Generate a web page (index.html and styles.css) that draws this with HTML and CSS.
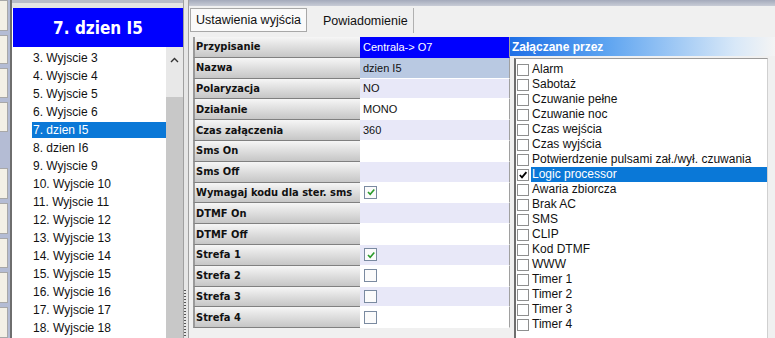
FILE: index.html
```html
<!DOCTYPE html>
<html>
<head>
<meta charset="utf-8">
<link rel="stylesheet" href="styles.css">
</head>
<body>
<div class="app">
  <div class="strip">
    <div class="sbtn h33"></div>
    <div class="sbtn h31"></div>
    <div class="sbtn h32"></div>
    <div class="sbtn h32"></div>
    <div class="sgap"></div>
    <div class="sbtn h33"></div>
    <div class="sbtn h33"></div>
    <div class="sbtn h32"></div>
    <div class="sbtn h33"></div>
    <div class="sbtn h33"></div>
  </div>
  <div class="left">
    <div class="left-top"></div>
    <div class="title">7. dzien I5</div>
    <div class="listwrap">
      <ul class="outlist">
        <li>3. Wyjscie 3</li>
        <li>4. Wyjscie 4</li>
        <li>5. Wyjscie 5</li>
        <li>6. Wyjscie 6</li>
        <li class="sel">7. dzien I5</li>
        <li>8. dzien I6</li>
        <li>9. Wyjscie 9</li>
        <li>10. Wyjscie 10</li>
        <li>11. Wyjscie 11</li>
        <li>12. Wyjscie 12</li>
        <li>13. Wyjscie 13</li>
        <li>14. Wyjscie 14</li>
        <li>15. Wyjscie 15</li>
        <li>16. Wyjscie 16</li>
        <li>17. Wyjscie 17</li>
        <li>18. Wyjscie 18</li>
      </ul>
      <div class="vscroll">
        <div class="arrow"><svg width="9" height="6" viewBox="0 0 9 6"><path d="M1 5 L4.5 1.5 L8 5" fill="none" stroke="#333" stroke-width="1.4"/></svg></div>
        <div class="thumb"></div>
      </div>
    </div>
  </div>
  <div class="splitter"><div class="grip"></div></div>
  <div class="main">
    <div class="topband"></div>
    <div class="tabs">
      <div class="tab active">Ustawienia wyjścia</div>
      <div class="tab">Powiadomienie</div>
    </div>
    <div class="content">
      <div class="grid">
        <div class="row"><div class="lab">Przypisanie</div><div class="val v-blue">Centrala-&gt; O7</div></div>
        <div class="row"><div class="lab">Nazwa</div><div class="val v-sel">dzien I5</div></div>
        <div class="row"><div class="lab">Polaryzacja</div><div class="val v-lav">NO</div></div>
        <div class="row"><div class="lab">Działanie</div><div class="val">MONO</div></div>
        <div class="row"><div class="lab">Czas załączenia</div><div class="val v-lav">360</div></div>
        <div class="row"><div class="lab">Sms On</div><div class="val"></div></div>
        <div class="row"><div class="lab">Sms Off</div><div class="val v-lav"></div></div>
        <div class="row"><div class="lab">Wymagaj kodu dla ster. sms</div><div class="val"><span class="cb on"><svg width="10" height="10" viewBox="0 0 10 10"><path d="M2 5 L4.2 7.3 L8.3 2.5" fill="none" stroke="#2a9a2a" stroke-width="1.6"/></svg></span></div></div>
        <div class="row"><div class="lab">DTMF On</div><div class="val v-lav"></div></div>
        <div class="row"><div class="lab">DTMF Off</div><div class="val"></div></div>
        <div class="row"><div class="lab">Strefa 1</div><div class="val v-lav"><span class="cb on"><svg width="10" height="10" viewBox="0 0 10 10"><path d="M2 5 L4.2 7.3 L8.3 2.5" fill="none" stroke="#2a9a2a" stroke-width="1.6"/></svg></span></div></div>
        <div class="row"><div class="lab">Strefa 2</div><div class="val"><span class="cb"></span></div></div>
        <div class="row"><div class="lab">Strefa 3</div><div class="val v-lav"><span class="cb"></span></div></div>
        <div class="row"><div class="lab">Strefa 4</div><div class="val"><span class="cb"></span></div></div>
      </div>
      <div class="right">
        <div class="rhead">Załączane przez</div>
        <div class="rbox">
          <ul class="chk">
            <li><span class="sq"></span><span class="t">Alarm</span></li>
            <li><span class="sq"></span><span class="t">Sabotaż</span></li>
            <li><span class="sq"></span><span class="t">Czuwanie pełne</span></li>
            <li><span class="sq"></span><span class="t">Czuwanie noc</span></li>
            <li><span class="sq"></span><span class="t">Czas wejścia</span></li>
            <li><span class="sq"></span><span class="t">Czas wyjścia</span></li>
            <li><span class="sq"></span><span class="t">Potwierdzenie pulsami zał./wył. czuwania</span></li>
            <li class="sel"><span class="sq"><svg width="10" height="10" viewBox="0 0 10 10"><path d="M1.8 5 L4 7.4 L8.4 2.2" fill="none" stroke="#000" stroke-width="1.8"/></svg></span><span class="t">Logic processor</span></li>
            <li><span class="sq"></span><span class="t">Awaria zbiorcza</span></li>
            <li><span class="sq"></span><span class="t">Brak AC</span></li>
            <li><span class="sq"></span><span class="t">SMS</span></li>
            <li><span class="sq"></span><span class="t">CLIP</span></li>
            <li><span class="sq"></span><span class="t">Kod DTMF</span></li>
            <li><span class="sq"></span><span class="t">WWW</span></li>
            <li><span class="sq"></span><span class="t">Timer 1</span></li>
            <li><span class="sq"></span><span class="t">Timer 2</span></li>
            <li><span class="sq"></span><span class="t">Timer 3</span></li>
            <li><span class="sq"></span><span class="t">Timer 4</span></li>
          </ul>
        </div>
      </div>
    </div>
  </div>
</div>
</body>
</html>
```

FILE: styles.css
```css
html, body {
  margin: 0;
  padding: 0;
}
body {
  width: 775px;
  height: 338px;
  overflow: hidden;
  background: #f0f0f0;
  font-family: "Liberation Sans", Arial, sans-serif;
  font-size: 12px;
  color: #000;
}
ul { margin: 0; padding: 0; list-style: none; }

.app {
  display: flex;
  height: 338px;
}

/* left button strip */
.strip {
  width: 10px;
  background: #b4bcd4;
  display: flex;
  flex-direction: column;
  gap: 4px;
  border-right: 2px solid #6e6e6e;
}
.sbtn {
  width: 8px;
  background: #f3f0e6;
  border: 1px solid #a8a8a8;
  border-left: none;
  box-sizing: border-box;
}
.h33 { height: 33px; }
.h31 { height: 31px; }
.h32 { height: 32px; }
.sgap { height: 30px; }

/* left panel */
.left {
  width: 171px;
  display: flex;
  flex-direction: column;
  background: #fff;
}
.left-top {
  height: 8px;
  background: linear-gradient(#b8bcc8 0 3px, #e4e4e4 3px);
}
.title {
  height: 39px;
  background: #0000ff;
  color: #fff;
  font-family: "DejaVu Sans Condensed", "DejaVu Sans", sans-serif;
  font-stretch: condensed;
  font-weight: bold;
  font-size: 17px;
  display: flex;
  align-items: center;
  justify-content: center;
  margin-left: 1px;
}
.listwrap {
  flex: 1;
  display: flex;
  min-height: 0;
}
.outlist {
  flex: 1;
  padding-top: 2px;
  padding-left: 20px;
}
.outlist li {
  height: 18px;
  line-height: 18px;
  padding-left: 1px;
  font-size: 12px;
  color: #111;
  white-space: nowrap;
}
.outlist li.sel {
  background: #0a78d7;
  color: #fff;
  height: 16px;
  line-height: 16px;
  margin: 1px 0;
}
.vscroll {
  width: 17px;
  background: #e8e8e8;
  display: flex;
  flex-direction: column;
  align-items: center;
}
.arrow {
  height: 22px;
  display: flex;
  align-items: center;
  justify-content: center;
  padding-top: 2px;
}
.thumb {
  margin-top: 26px;
  width: 17px;
  flex: 1;
  background: #c8c8c8;
}

/* splitter */
.splitter {
  width: 6px;
  background: #e6e6e6;
  border-left: 1px solid #a0a0a0;
  border-right: 1px solid #a0a0a0;
  display: flex;
  flex-direction: column;
  justify-content: flex-end;
  box-sizing: border-box;
}
.grip {
  height: 48px;
  width: 2px;
  margin-left: 0;
  background: repeating-linear-gradient(#555 0 1px, transparent 1px 3px);
}

/* main */
.main {
  flex: 1;
  display: flex;
  flex-direction: column;
  min-width: 0;
}
.topband {
  height: 6px;
  background: linear-gradient(#a4aabb, #c8ccd6);
}
.tabs {
  height: 25px;
  display: flex;
  align-items: stretch;
  padding-left: 1px;
  padding-top: 2px;
}
.tab {
  padding: 0 5px 0 14px;
  display: flex;
  align-items: center;
  font-size: 12.5px;
  color: #111;
  border-right: 1px solid #b0b0b0;
}
.tab.active {
  background: #fafafa;
  border: 1px solid #a8a8a8;
  padding: 0 5px;
  margin-right: 2px;
  border-bottom: 1px solid #a8a8a8;
  height: 22px;
}
.content {
  display: flex;
  margin-top: 4px;
  flex: 1;
  min-height: 0;
}
.grid {
  margin-left: 4px;
  width: 317px;
  display: flex;
  flex-direction: column;
}
.row {
  display: flex;
  height: 20.8px;
}
.lab {
  width: 167px;
  box-sizing: border-box;
  background: linear-gradient(#f6f6f6, #d9d9d9 60%, #c6c6c6);
  border-bottom: 1px solid #808080;
  border-left: 2px solid #9a9a9a;
  padding-left: 1px;
  font-family: "DejaVu Sans Condensed", "DejaVu Sans", sans-serif;
  font-stretch: condensed;
  font-weight: bold;
  font-size: 11px;
  color: #111;
  display: flex;
  align-items: center;
  white-space: nowrap;
}
.val {
  width: 150px;
  box-sizing: border-box;
  background: #fff;
  border-right: 1px solid #a0a0a0;
  border-bottom: 1px solid #fff;
  padding-left: 3px;
  font-size: 11px;
  display: flex;
  align-items: center;
  color: #111;
}
.v-blue { background: #0000ff; color: #fff; border-bottom-color: #0000ff; }
.v-sel { background: #b9c9e2; }
.v-lav { background: #e8e8f8; }
.cb {
  width: 13px;
  height: 13px;
  box-sizing: border-box;
  border: 1px solid #7a8aa0;
  background: #fbfbfb;
  display: flex;
  align-items: center;
  justify-content: center;
  margin-left: 1px;
}

/* right panel */
.right {
  flex: 1;
  display: flex;
  flex-direction: column;
  min-width: 0;
}
.rhead {
  height: 19px;
  background: linear-gradient(90deg, #1f6fe6, #5aa2f0 35%, #d8e8f8 85%, #f4f4f4);
  color: #fff;
  font-weight: bold;
  font-size: 12px;
  display: flex;
  align-items: center;
  padding-left: 2px;
}
.rbox {
  flex: 1;
  margin: 2px 7px 0 4px;
  background: #fff;
  border-left: 2px solid #6e6e6e;
  border-top: 1px solid #9a9a9a;
  border-right: 1px solid #d0d0d0;
  min-height: 0;
}
.chk {
  padding-top: 3px;
}
.chk li {
  height: 15px;
  display: flex;
  align-items: center;
  white-space: nowrap;
}
.sq {
  width: 12px;
  height: 12px;
  box-sizing: border-box;
  border: 1px solid #8e8f8f;
  background: #fff;
  margin-left: 1px;
  margin-right: 2px;
  display: flex;
  align-items: center;
  justify-content: center;
  flex: none;
}
.chk .t {
  font-size: 12px;
  color: #111;
  height: 15px;
  line-height: 15px;
  padding-left: 1px;
  flex: 1;
}
.chk li.sel .t {
  background: #0a78d7;
  color: #fff;
}
```
